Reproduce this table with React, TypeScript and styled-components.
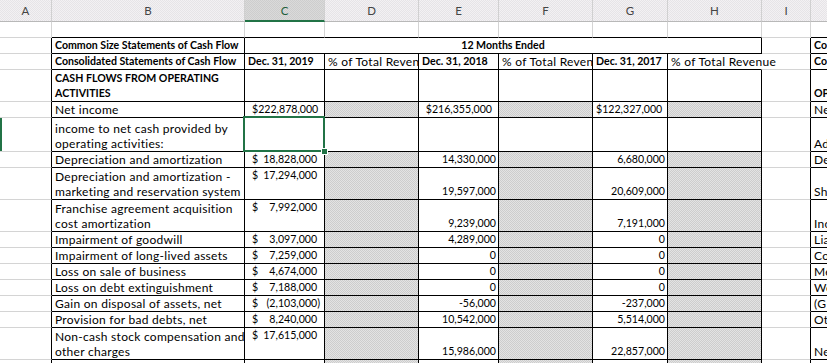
import React from 'react';
import styled, { createGlobalStyle } from 'styled-components';

const GRID = '#d4d4d4';
const INK = '#000000';
const GREEN = '#217346';
const FONT = `'Lato', 'Liberation Sans', sans-serif`;

type Edge = 'grid' | 'ink' | 'none';

const edge = (e: Edge = 'grid') =>
  e === 'ink' ? `1px solid ${INK}` : e === 'grid' ? `1px solid ${GRID}` : '1px solid transparent';

const COLUMNS = ['A', 'B', 'C', 'D', 'E', 'F', 'G', 'H', 'I', 'J'];
const WIDTHS = [52, 193, 80, 94, 80, 94, 75, 94, 49, 120];

type Line = {
  h: number;
  label: string;
  bold?: boolean;
  c?: string;
  e?: string;
  g?: string;
  j?: string;
  jBold?: boolean;
  shaded?: boolean;
  selected?: boolean;
};

const lines: Line[] = [
  { h: 32, label: 'CASH FLOWS FROM OPERATING\nACTIVITIES', bold: true, j: 'OP', jBold: true },
  { h: 16, label: 'Net income', c: '222,878,000', e: '$216,355,000', g: '$122,327,000', j: 'Ne', shaded: true },
  { h: 34, label: 'income to net cash provided by\noperating activities:', j: 'Ad', selected: true },
  { h: 16, label: 'Depreciation and amortization', c: '18,828,000', e: '14,330,000', g: '6,680,000', j: 'De', shaded: true },
  { h: 32, label: 'Depreciation and amortization -\nmarketing and reservation system', c: '17,294,000', e: '19,597,000', g: '20,609,000', j: 'Sh', shaded: true },
  { h: 32, label: 'Franchise agreement acquisition\ncost amortization', c: '7,992,000', e: '9,239,000', g: '7,191,000', j: 'Inc', shaded: true },
  { h: 16, label: 'Impairment of goodwill', c: '3,097,000', e: '4,289,000', g: '0', j: 'Lia', shaded: true },
  { h: 16, label: 'Impairment of long-lived assets', c: '7,259,000', e: '0', g: '0', j: 'Co', shaded: true },
  { h: 16, label: 'Loss on sale of business', c: '4,674,000', e: '0', g: '0', j: 'Me', shaded: true },
  { h: 16, label: 'Loss on debt extinguishment', c: '7,188,000', e: '0', g: '0', j: 'Wo', shaded: true },
  { h: 16, label: 'Gain on disposal of assets, net', c: '(2,103,000)', e: '-56,000', g: '-237,000', j: '(G', shaded: true },
  { h: 16, label: 'Provision for bad debts, net', c: '8,240,000', e: '10,542,000', g: '5,514,000', j: 'Ot', shaded: true },
  { h: 32, label: 'Non-cash stock compensation and\nother charges', c: '17,615,000', e: '15,986,000', g: '22,857,000', j: 'Ne', shaded: true },
  { h: 16, label: '', shaded: true },
];

const ROW_HEIGHTS = [22, 16, 16, 16, ...lines.map((l) => l.h)];

const GlobalStyle = createGlobalStyle`
  html, body {
    margin: 0;
    padding: 0;
    background: #ffffff;
  }
  body {
    font-family: ${FONT};
    overflow: hidden;
  }
`;

const Sheet = styled.div`
  width: 827px;
  height: 363px;
  overflow: hidden;
  display: grid;
  grid-template-columns: ${WIDTHS.map((w) => `${w}px`).join(' ')};
  grid-template-rows: ${ROW_HEIGHTS.map((h) => `${h}px`).join(' ')};
  font-size: 12px;
  color: #000;
`;

const ColHead = styled.div<{ $active?: boolean }>`
  box-sizing: border-box;
  display: flex;
  align-items: center;
  justify-content: center;
  font-size: 11.5px;
  color: ${(p) => (p.$active ? '#1e5e3a' : '#444')};
  background: ${(p) =>
    p.$active
      ? 'repeating-conic-gradient(#cdcdcd 0 25%, #dadada 0 50%) 0 0 / 2px 2px'
      : 'repeating-conic-gradient(#f3f1f3 0 25%, #e6e4e7 0 50%) 0 0 / 2px 2px'};
  border-right: 1px solid #d0d0d0;
  border-bottom: ${(p) => (p.$active ? `2px solid ${GREEN}` : '1px solid #b8b8b8')};
  padding-bottom: ${(p) => (p.$active ? '0' : '1px')};
`;

const Cell = styled.div<{
  $r?: Edge;
  $b?: Edge;
  $bold?: boolean;
  $align?: 'left' | 'right' | 'center';
  $top?: boolean;
  $shaded?: boolean;
  $spill?: boolean;
  $span?: number;
  $marker?: boolean;
  $trail?: number;
}>`
  box-sizing: border-box;
  position: relative;
  display: flex;
  flex-direction: column;
  justify-content: ${(p) => (p.$top ? 'flex-start' : 'flex-end')};
  grid-column: ${(p) => (p.$span ? `span ${p.$span}` : 'auto')};
  border-right: ${(p) => edge(p.$r)};
  border-bottom: ${(p) => edge(p.$b)};
  padding: 0 ${(p) => p.$trail ?? 3}px 0 3px;
  line-height: 15px;
  white-space: pre;
  overflow: ${(p) => (p.$spill ? 'visible' : 'hidden')};
  font-weight: ${(p) => (p.$bold ? 700 : 400)};
  font-size: ${(p) => (p.$bold ? '10.6px' : '12px')};
  letter-spacing: ${(p) => (p.$bold ? '0' : '0.28px')};
  text-align: ${(p) => p.$align ?? 'left'};
  background: ${(p) =>
    p.$shaded ? 'repeating-conic-gradient(#cdcdcd 0 25%, #e3e3e3 0 50%) 0 0 / 2px 2px' : 'transparent'};
  box-shadow: ${(p) => (p.$marker ? `inset 2px 0 0 ${GREEN}` : 'none')};
`;

const Numeric = styled.span`
  font-size: 10.6px;
  letter-spacing: 0;
`;

const Accounting = styled.div`
  display: flex;
  justify-content: space-between;
  padding: 0 4px 0 4px;
  font-size: 10.6px;
  letter-spacing: 0;
`;

const Paren = styled.span`
  visibility: hidden;
`;

const Selection = styled.div`
  position: absolute;
  z-index: 2;
  top: -2px;
  left: -2px;
  right: -1px;
  bottom: -1px;
  border: 2px solid ${GREEN};
  pointer-events: none;
`;

const FillHandle = styled.div`
  position: absolute;
  right: -4px;
  bottom: -4px;
  width: 5px;
  height: 5px;
  background: ${GREEN};
  outline: 1px solid #ffffff;
`;

function Money({ value }: { value?: string }) {
  if (!value) return null;
  const negative = value.startsWith('(');
  return (
    <Accounting>
      <span>$</span>
      <span>
        {value}
        {!negative && <Paren>)</Paren>}
      </span>
    </Accounting>
  );
}

function Figure({ value }: { value?: string }) {
  if (!value) return null;
  return <Numeric>{value}</Numeric>;
}

function App() {
  return (
    <>
      <GlobalStyle />
      <Sheet>
        {COLUMNS.map((c) => (
          <ColHead key={c} $active={c === 'C'}>
            {c}
          </ColHead>
        ))}

        {/* blank row above the table */}
        <Cell $r="grid" />
        {[0, 1, 2, 3, 4, 5, 6].map((i) => (
          <Cell key={i} $r="grid" $b="ink" />
        ))}
        <Cell $r="grid" />
        <Cell $r="grid" $b="ink" />

        {/* title row */}
        <Cell $r="ink" />
        <Cell $r="ink" $b="ink" $bold>
          Common Size Statements of Cash Flow
        </Cell>
        <Cell $span={6} $r="ink" $b="ink" $bold $align="center">
          12 Months Ended
        </Cell>
        <Cell $r="ink" />
        <Cell $r="grid" $b="ink" $bold>
          Co
        </Cell>

        {/* period row */}
        <Cell $r="ink" />
        <Cell $r="ink" $b="ink" $bold>
          Consolidated Statements of Cash Flow
        </Cell>
        <Cell $r="ink" $b="ink" $bold>
          Dec. 31, 2019
        </Cell>
        <Cell $r="ink" $b="ink">
          % of Total Revenue
        </Cell>
        <Cell $r="ink" $b="ink" $bold>
          Dec. 31, 2018
        </Cell>
        <Cell $r="ink" $b="ink">
          % of Total Revenue
        </Cell>
        <Cell $r="ink" $b="ink" $bold>
          Dec. 31, 2017
        </Cell>
        <Cell $r="none" $b="ink" $spill>
          % of Total Revenue
        </Cell>
        <Cell $r="ink" />
        <Cell $r="grid" $b="ink" $bold>
          Co
        </Cell>

        {lines.map((l, i) => (
          <React.Fragment key={i}>
            <Cell $r="ink" $marker={l.selected} />
            <Cell $r="ink" $b="ink" $bold={l.bold}>
              {l.label}
            </Cell>
            <Cell $r="ink" $b="ink" $top $spill={l.selected} $trail={0}>
              <Money value={l.c} />
              {l.selected && (
                <Selection>
                  <FillHandle />
                </Selection>
              )}
            </Cell>
            <Cell $r="ink" $b="ink" $shaded={l.shaded} />
            <Cell $r="ink" $b="ink" $align="right" $trail={l.e?.startsWith('$') ? 6 : 2}>
              <Figure value={l.e} />
            </Cell>
            <Cell $r="ink" $b="ink" $shaded={l.shaded} />
            <Cell $r="ink" $b="ink" $align="right" $trail={l.g?.startsWith('$') ? 6 : 2}>
              <Figure value={l.g} />
            </Cell>
            <Cell $r="ink" $b="ink" $shaded={l.shaded} />
            <Cell $r="ink" />
            <Cell $r="grid" $b="ink" $bold={l.jBold}>
              {l.j}
            </Cell>
          </React.Fragment>
        ))}
      </Sheet>
    </>
  );
}

export default App;
